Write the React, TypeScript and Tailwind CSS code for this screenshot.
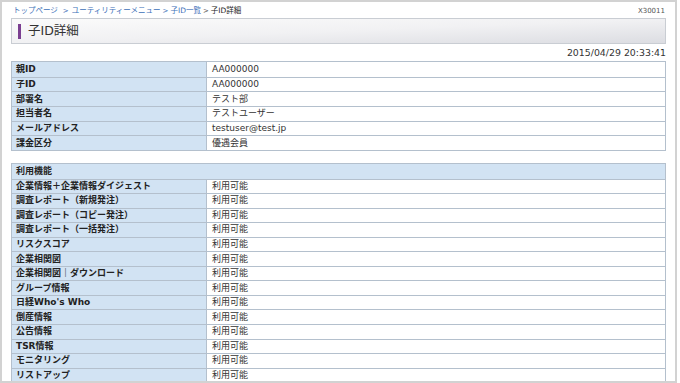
import React from "react";

const F = '"DejaVu Sans", Verdana, "Noto Sans CJK JP", sans-serif';

const info: [string, string][] = [
  ["親ID", "AA000000"],
  ["子ID", "AA000000"],
  ["部署名", "テスト部"],
  ["担当者名", "テストユーザー"],
  ["メールアドレス", "testuser@test.jp"],
  ["課金区分", "優遇会員"],
];

const features = [
  "企業情報＋企業情報ダイジェスト",
  "調査レポート（新規発注）",
  "調査レポート（コピー発注）",
  "調査レポート（一括発注）",
  "リスクスコア",
  "企業相関図",
  "企業相関図｜ダウンロード",
  "グループ情報",
  "日経Who's Who",
  "倒産情報",
  "公告情報",
  "TSR情報",
  "モニタリング",
  "リストアップ",
];

function Row({ label, value, first, tall }: { label: string; value: string; first?: boolean; tall?: boolean }) {
  return (
    <div className={`flex ${tall ? "h-[14.67px]" : "h-[14.56px]"} ${first ? "" : "border-t border-[#b4c0cd]"}`}>
      <div className="w-[195px] shrink-0 bg-[#d2e3f3] border-r border-[#b4c0cd] pl-[4px] flex items-center text-[9px] font-bold text-[#222] leading-none whitespace-nowrap">
        {label}
      </div>
      <div className="flex-1 bg-white pl-[5px] flex items-center text-[9px] text-[#333] leading-none whitespace-nowrap">
        {value}
      </div>
    </div>
  );
}

export default function App() {
  return (
    <div className="w-[680px] h-[383px] bg-white overflow-hidden" style={{ fontFamily: F }}>
      <div className="w-[677px] h-[383px] border-2 border-[#d2d2d2] overflow-hidden bg-white">
        <div className="pl-[9px] pr-[9px]">
          <div className="flex justify-between items-center h-[16px] pt-[2px]">
            <div className="pl-[2px] text-[7.5px] leading-none flex items-center whitespace-nowrap">
              <span className="text-[#3c6fb8]">トップページ</span>
              <span className="text-[#3c6fb8] ml-[5px] text-[7px]">&gt;</span>
              <span className="text-[#3c6fb8] ml-[3px]">ユーティリティーメニュー</span>
              <span className="text-[#3c6fb8] ml-[2px] text-[7px]">&gt;</span>
              <span className="text-[#3c6fb8] ml-[2px]">子ID一覧</span>
              <span className="text-[#555] ml-[2px] text-[7px]">&gt;</span>
              <span className="text-[#222] ml-[2px]">子ID詳細</span>
            </div>
            <div className="text-[7px] text-[#555] leading-none pr-[1px]">X30011</div>
          </div>
          <div className="h-[26px] border border-[#c9cdd3] bg-gradient-to-br from-[#fbfbfb] via-[#f1f1f3] to-[#dcdde2] flex items-center pl-[6px]">
            <div className="w-[3px] h-[15px] bg-[#7b3f91]" />
            <div className="ml-[7px] text-[12.5px] text-[#333] leading-none">子ID詳細</div>
          </div>
          <div className="h-[17px] flex items-center justify-end text-[9.4px] text-[#333] leading-none">
            2015/04/29 20:33:41
          </div>
          <div className="border border-[#b4c0cd]">
            {info.map(([l, v], i) => (
              <Row key={l} label={l} value={v} first={i === 0} tall />
            ))}
          </div>
          <div className="mt-[12px] border border-[#b4c0cd]">
            <div className="h-[14.6px] bg-[#d2e3f3] pl-[4px] flex items-center text-[9px] font-bold text-[#222] leading-none">
              利用機能
            </div>
            {features.map((f) => (
              <Row key={f} label={f} value="利用可能" />
            ))}
          </div>
        </div>
      </div>
    </div>
  );
}
